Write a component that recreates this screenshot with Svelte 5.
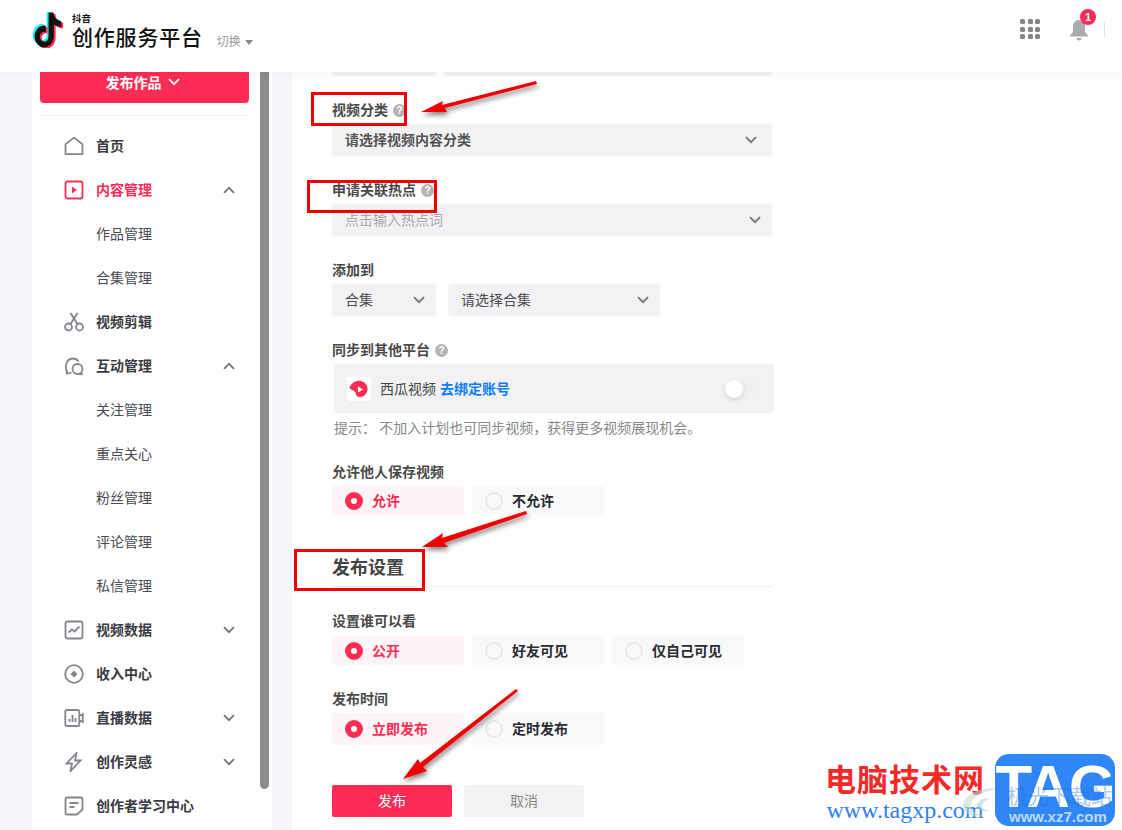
<script lang="ts">
    const tiktok = "M12.525.02c1.31-.02 2.61-.01 3.91-.02.08 1.53.63 3.09 1.75 4.17 1.12 1.11 2.7 1.62 4.24 1.79v4.03c-1.44-.05-2.89-.35-4.2-.97-.57-.26-1.1-.59-1.62-.93-.01 2.92.01 5.84-.02 8.75-.08 1.4-.54 2.79-1.35 3.94-1.31 1.92-3.58 3.17-5.91 3.21-1.43.08-2.86-.31-4.08-1.03-2.02-1.19-3.44-3.37-3.65-5.71-.02-.5-.03-1-.01-1.49.18-1.9 1.12-3.72 2.58-4.96 1.66-1.44 3.98-2.13 6.15-1.72.02 1.48-.04 2.96-.04 4.44-.99-.32-2.15-.23-3.02.37-.63.41-1.11 1.04-1.36 1.75-.21.51-.15 1.07-.14 1.61.24 1.64 1.82 3.02 3.5 2.87 1.12-.01 2.19-.66 2.77-1.61.19-.33.4-.67.41-1.06.1-1.79.06-3.57.07-5.36.01-4.03-.01-8.05.02-12.07z";

    const menu = [
        { label: "首页", icon: "home" },
        { label: "内容管理", icon: "play", active: true, arrow: "up" },
        { label: "作品管理", sub: true },
        { label: "合集管理", sub: true },
        { label: "视频剪辑", icon: "cut" },
        { label: "互动管理", icon: "chat", arrow: "up" },
        { label: "关注管理", sub: true },
        { label: "重点关心", sub: true },
        { label: "粉丝管理", sub: true },
        { label: "评论管理", sub: true },
        { label: "私信管理", sub: true },
        { label: "视频数据", icon: "chart", arrow: "down" },
        { label: "收入中心", icon: "coin" },
        { label: "直播数据", icon: "live", arrow: "down" },
        { label: "创作灵感", icon: "bolt", arrow: "down" },
        { label: "创作者学习中心", icon: "doc" }
    ];

    const saveOptions = [
        { label: "允许", on: true },
        { label: "不允许" }
    ];
    const viewOptions = [
        { label: "公开", on: true },
        { label: "好友可见" },
        { label: "仅自己可见" }
    ];
    const timeOptions = [
        { label: "立即发布", on: true },
        { label: "定时发布" }
    ];
</script>

{#snippet chevron(cls = "")}
    <svg class="chev {cls}" viewBox="0 0 12 8" width="12" height="8">
        <path d="M1 1.2l5 5 5-5" />
    </svg>
{/snippet}

{#snippet help()}
    <span class="help">?</span>
{/snippet}

{#snippet radios(options, tall = false)}
    <div class="radios" class:tall>
        {#each options as o}
            <div class="radio" class:on={o.on}>
                <span class="dot"></span>
                <span>{o.label}</span>
            </div>
        {/each}
    </div>
{/snippet}

{#snippet menuIcon(name)}
    <svg class="micon" class:pink={name === "play"} viewBox="0 0 20 20" width="20" height="20">
        {#if name === "home"}
            <path d="M1.5 18.200V8.200L10 1.600l8.500 6.600v10z" stroke-linejoin="round" />
        {:else if name === "play"}
            <rect x="1.500" y="1.500" width="17" height="17" rx="2" />
            <path class="solid" d="M8 6.500l5 3.500-5 3.500z" />
        {:else if name === "cut"}
            <circle cx="4.500" cy="15" r="3.500" />
            <circle cx="15.500" cy="15" r="3.500" />
            <path d="M6.500 12L13.500 1M13.500 12L6.500 1" />
        {:else if name === "chat"}
            <path d="M3.500 16.500C1 13 1 3 8.500 2.500c2.500-.2 4.500.8 6 3" />
            <path d="M2.500 18l.5-4M2.500 18l5-1.500" />
            <circle cx="13.500" cy="13" r="5" />
            <path d="M15 18.200h4" />
        {:else if name === "chart"}
            <rect x="1.500" y="1.500" width="17" height="17" rx="2" />
            <path d="M4.500 12.500l3.500-3 2.500 2 5-5" />
        {:else if name === "coin"}
            <circle cx="10" cy="10" r="8.800" />
            <path class="solid" d="M10 6.500l3.500 3.500-3.500 3.500-3.500-3.500z" />
        {:else if name === "live"}
            <path d="M2.800 2h11a1.500 1.500 0 0 1 1.500 1.500v13a1.500 1.500 0 0 1-1.500 1.500h-11a1.500 1.500 0 0 1-1.500-1.500v-13A1.500 1.500 0 0 1 2.800 2zM15.300 8l3.500-2v8l-3.500-2" />
            <path d="M5.500 14v-3M8.500 14V7M11.500 14v-4" />
        {:else if name === "bolt"}
            <path d="M12.500 1L2.500 11.500h5.500L6.500 19l10-10.500h-5.500z" />
        {:else if name === "doc"}
            <path d="M3 1.500h14a1.500 1.500 0 0 1 1.500 1.500v10.500L13 18.500H3A1.500 1.500 0 0 1 1.500 17V3A1.500 1.500 0 0 1 3 1.500z" />
            <path d="M5.500 7h9M5.500 11h5" />
        {/if}
    </svg>
{/snippet}

<div class="page">
    <header>
        <div class="logo">
            <svg class="note" viewBox="0 0 24 24" width="32" height="36" preserveAspectRatio="none">
                <path d={tiktok} fill="#25f4ee" transform="translate(-1 -.7) scale(.96)" />
                <path d={tiktok} fill="#fe2c55" transform="translate(1.800 1.400) scale(.96)" />
                <path d={tiktok} fill="#111" transform="translate(.4 .4) scale(.96)" />
            </svg>
            <div class="brand">
                <span class="brand-small">抖音</span>
                <span class="brand-name">创作服务平台</span>
            </div>
        </div>
        <div class="switch">切换<i></i></div>
        <div class="tools">
            <div class="apps">
                {#each Array(9) as _}<i></i>{/each}
            </div>
            <div class="bell">
                <svg viewBox="0 0 20 22" width="20" height="22">
                    <path d="M10 1c-4 0-6 3-6 7v5l-3 3.500v1h18v-1L16 13V8c0-4-2-7-6-7z" fill="#acacac" />
                    <path d="M7.500 19h5a2.500 2.500 0 0 1-5 0z" fill="#acacac" />
                </svg>
                <span class="badge">1</span>
            </div>
            <span class="tool-line"></span>
        </div>
    </header>

    <div class="main">
        <aside>
            <div class="publish">发布作品 {@render chevron("white")}</div>
            <div class="side-line"></div>
            <nav>
                {#each menu as m}
                    <div class="row" class:sub={m.sub} class:active={m.active}>
                        {#if m.icon}{@render menuIcon(m.icon)}{/if}
                        <span class="row-text">{m.label}</span>
                        {#if m.arrow}{@render chevron(m.arrow === "up" ? "up side" : "side")}{/if}
                    </div>
                {/each}
            </nav>
            <div class="thumb"></div>
        </aside>

        <section class="content">
            <div class="clipped">
                <div class="select w104"></div>
                <div class="select grow"></div>
            </div>

            <div class="field">
                <div class="label">视频分类 {@render help()}</div>
                <div class="select full strong"><span>请选择视频内容分类</span> {@render chevron("wide")}</div>
            </div>

            <div class="field">
                <div class="label">申请关联热点 {@render help()}</div>
                <div class="select full muted"><span>点击输入热点词</span> {@render chevron()}</div>
            </div>

            <div class="field">
                <div class="label">添加到</div>
                <div class="pair">
                    <div class="select w104"><span>合集</span> {@render chevron()}</div>
                    <div class="select w212"><span>请选择合集</span> {@render chevron()}</div>
                </div>
            </div>

            <div class="field">
                <div class="label">同步到其他平台 {@render help()}</div>
                <div class="sync">
                    <span class="xigua">
                        <svg viewBox="0 0 24 24" width="24" height="24">
                            <path d="M3 9.500C5 5.500 10 3 14 4c4.500 1 7 5 6.500 9-.5 4.500-4.500 7.500-8.500 7-2-.2-3-1.500-3-3 0-1-.8-2-2-3-1.500-1.200-5-2-4.500-4.500z" fill="#fe2c55" />
                            <path d="M11 9.500l5 3-5 3z" fill="#fff" />
                        </svg>
                    </span>
                    <span class="sync-text">西瓜视频</span>
                    <span class="link sync-text">去绑定账号</span>
                    <span class="toggle"><i></i></span>
                </div>
                <div class="hint">提示： 不加入计划也可同步视频，获得更多视频展现机会。</div>
            </div>

            <div class="field save">
                <div class="label">允许他人保存视频</div>
                {@render radios(saveOptions)}
            </div>

            <h2>发布设置</h2>

            <div class="field view">
                <div class="label">设置谁可以看</div>
                {@render radios(viewOptions)}
            </div>

            <div class="field time">
                <div class="label">发布时间</div>
                {@render radios(timeOptions, true)}
            </div>

            <div class="actions">
                <div class="btn primary">发布</div>
                <div class="btn">取消</div>
            </div>
        </section>
    </div>

    <!-- screenshot annotations -->
    <svg class="marks" viewBox="0 0 1122 830" width="1122" height="830">
        <defs>
            <filter id="sh" x="-20%" y="-40%" width="140%" height="180%">
                <feDropShadow dx="1" dy="3" stdDeviation="2.500" flood-color="#000" flood-opacity=".5" />
            </filter>
        </defs>
        <rect class="box" x="312.500" y="93.500" width="93" height="31" />
        <rect class="box" x="308.500" y="181.500" width="127" height="30" />
        <rect class="box" x="295.500" y="550.500" width="128" height="39" />
        <g filter="url(#sh)" fill="#f00000">
            <polygon points="421,112 443,101 442,105 536,81 537,84 445,108 447,112" />
            <polygon points="422,547 443,533 442,538 526,511 527,514 444,543 448,547" />
            <polygon points="403,779 418,759 420,763 516,689 518,691 423,767 427,771" />
        </g>
    </svg>

    <div class="watermark">
        <div class="wm-text">
            <span class="wm-cn">电脑技术网</span>
            <span class="wm-url">www.tagxp.com</span>
        </div>
        <svg class="swirl" viewBox="0 0 40 34" width="40" height="34">
            <path d="M38 3C22 0 6 8 3 18c-2 8 8 14 22 12C14 28 8 22 12 15 16 9 26 5 38 3z" fill="#bcd9c8" opacity=".55" />
            <path d="M30 12c-8 0-14 4-13 9 1 3 6 5 12 4-5-1-8-3-7-6 1-3 4-5 8-7z" fill="#a9cbe8" opacity=".6" />
        </svg>
        <div class="tag">
            TAG
            <span class="tag-cn">极光下载站</span>
            <span class="tag-url">www.xz7.com</span>
        </div>
    </div>
</div>

<style>
    :global(body) {
        margin: 0;
        background: #f6f7fb;
    }

    .page {
        position: relative;
        width: 1122px;
        height: 830px;
        overflow: hidden;
        font-family: "Noto Sans CJK SC", "Liberation Sans", sans-serif;
        font-size: 14px;
        color: #333;
    }

    header {
        position: relative;
        z-index: 2;
        height: 72px;
        box-sizing: border-box;
        padding: 12px 17px 0 32px;
        background: #fff;
        box-shadow: 0 2px 8px rgb(0 0 0 / 0.04);
        display: flex;
        align-items: flex-start;
    }

    .logo {
        display: flex;
        gap: 8px;
    }

    .note {
        display: block;
    }

    .brand {
        display: flex;
        flex-direction: column;
        color: #111;
    }

    .brand-small {
        font-size: 9.500px;
        line-height: 12px;
        font-weight: 700;
    }

    .brand-name {
        font-size: 21px;
        line-height: 24px;
        letter-spacing: 0.800px;
        font-weight: 500;
    }

    .switch {
        margin: 20px 0 0 14px;
        font-size: 12px;
        line-height: 18px;
        color: #999;
        display: flex;
        align-items: center;
        gap: 4px;
    }

    .switch i {
        width: 0;
        height: 0;
        margin-top: 2px;
        border: 4px solid transparent;
        border-top: 5px solid #888;
        border-bottom: 0;
    }

    .tools {
        margin-left: auto;
        display: flex;
        align-items: flex-start;
    }

    .apps {
        display: grid;
        grid-template-columns: repeat(3, 5px);
        gap: 2.500px;
        margin: 7px 29px 0 0;
    }

    .apps i {
        width: 5px;
        height: 5px;
        border-radius: 1.500px;
        background: #858585;
    }

    .bell {
        position: relative;
        width: 20px;
        height: 22px;
        margin-top: 7px;
    }

    .bell svg {
        display: block;
    }

    .badge {
        position: absolute;
        left: 11px;
        top: -10px;
        width: 16px;
        height: 16px;
        border-radius: 50%;
        background: #fe2c55;
        color: #fff;
        font: 700 11px/16px "Liberation Sans", sans-serif;
        text-align: center;
    }

    .tool-line {
        width: 1px;
        height: 16px;
        margin: 10px 0 0 15px;
        background: #e3e3e3;
    }

    .main {
        display: flex;
        height: 758px;
        overflow: hidden;
    }

    aside {
        position: relative;
        flex: none;
        width: 240px;
        margin: 0 20px 0 32px;
        box-sizing: border-box;
        padding: 0 23px 0 8px;
        background: #fff;
    }

    .publish {
        height: 31px;
        background: #fe2c55;
        border-radius: 0 0 4px 4px;
        color: #fff;
        font-weight: 700;
        line-height: 20px;
        display: flex;
        justify-content: center;
        align-items: flex-start;
        gap: 6px;
        padding-right: 4px;
        box-sizing: border-box;
    }

    .publish :global(.chev) {
        margin-top: 6px;
    }

    .side-line {
        height: 1px;
        margin-top: 12px;
        background: #eeeeef;
    }

    nav {
        margin-top: 8px;
    }

    .row {
        height: 44px;
        display: flex;
        align-items: center;
        gap: 12px;
        padding: 0 14px 0 24px;
        font-weight: 700;
        color: #3a3a42;
    }

    .row-text {
        margin-bottom: 2px;
    }

    .row.sub {
        padding-left: 56px;
        font-weight: 400;
        color: #4a4a52;
    }

    .row.active {
        color: #fe2c55;
        font-weight: 700;
    }

    .micon {
        flex: none;
        fill: none;
        stroke: #85858d;
        stroke-width: 1.800;
    }

    .micon.pink {
        stroke: #fe2c55;
    }

    .micon .solid {
        fill: currentColor;
        stroke: none;
        color: #85858d;
    }

    .micon.pink .solid {
        color: #fe2c55;
    }

    .thumb {
        position: absolute;
        top: 0;
        right: 3px;
        width: 9px;
        height: 717px;
        background: #8c8c8c;
        border-radius: 0 0 5px 5px;
    }

    .chev {
        flex: none;
        fill: none;
        stroke: #74747c;
        stroke-width: 1.800;
        margin-left: auto;
    }

    .chev.up {
        transform: rotate(180deg);
    }

    .chev.white {
        stroke: #fff;
        margin-left: 0;
    }

    .chev.wide {
        margin-right: 4px;
    }

    .content {
        flex: 1;
        box-sizing: border-box;
        padding-left: 40px;
        background: #fff;
    }

    .clipped {
        display: flex;
        gap: 8px;
        width: 440px;
        height: 4px;
        margin-bottom: 24px;
    }

    .clipped .select {
        height: 4px;
        padding: 0;
    }

    .field {
        margin-bottom: 24px;
    }

    .label {
        height: 20px;
        margin-bottom: 4px;
        line-height: 18px;
        font-weight: 700;
        color: #4a4a4a;
        display: flex;
        align-items: flex-start;
        gap: 5px;
    }

    .help {
        width: 13px;
        height: 13px;
        margin-top: 4px;
        border-radius: 50%;
        background: #b4b4b4;
        color: #fff;
        font: 700 10px/13px "Liberation Sans", sans-serif;
        text-align: center;
    }

    .select {
        height: 32px;
        box-sizing: border-box;
        padding: 0 11px 0 13px;
        background: #f2f2f4;
        border-radius: 4px;
        display: flex;
        align-items: center;
        justify-content: space-between;
        color: #4c4c4c;
    }

    .select span {
        margin-bottom: 2px;
    }

    .select.full {
        width: 440px;
    }

    .select.strong {
        font-weight: 700;
        color: #555;
    }

    .select.muted {
        color: #aaa;
    }

    .w104 {
        width: 104px;
    }

    .w212 {
        width: 212px;
    }

    .grow {
        flex: 1;
    }

    .pair {
        display: flex;
        gap: 12px;
    }

    .sync {
        width: 440px;
        height: 49px;
        margin-left: 2px;
        box-sizing: border-box;
        padding: 0 12px 0 13px;
        background: #f2f2f4;
        border-radius: 4px;
        display: flex;
        align-items: center;
        color: #444;
    }

    .sync-text {
        margin-bottom: 2px;
    }

    .xigua {
        width: 24px;
        height: 24px;
        margin-right: 9px;
        background: #fff;
        border-radius: 3px;
    }

    .xigua svg {
        display: block;
    }

    .link {
        margin-left: 4px;
        color: #0d7dfb;
        font-weight: 700;
    }

    .toggle {
        position: relative;
        width: 37px;
        height: 22px;
        margin-left: auto;
        border-radius: 11px;
        background: #f0f0f2;
    }

    .toggle i {
        position: absolute;
        left: 0;
        top: 2px;
        width: 18px;
        height: 18px;
        border-radius: 50%;
        background: #fff;
        box-shadow: 0 2px 5px rgb(0 0 0 / 0.12);
    }

    .hint {
        height: 21px;
        margin: 4px 0 0 2px;
        line-height: 20px;
        color: #888;
    }

    .field.save {
        margin-bottom: 0;
    }

    .radios {
        display: flex;
        gap: 8px;
    }

    .radio {
        width: 132px;
        height: 29px;
        box-sizing: border-box;
        padding-left: 13px;
        background: #f8f9f9;
        border-radius: 2px;
        display: flex;
        align-items: center;
        gap: 9px;
        font-weight: 700;
        color: #2a2a32;
    }

    .radio span:last-child {
        margin-bottom: 2px;
    }

    .radios.tall .radio {
        height: 32px;
    }

    .radio.on {
        background: #fff5f7;
        color: #fe2c55;
    }

    .dot {
        width: 18px;
        height: 18px;
        box-sizing: border-box;
        border: 2px solid #e8e8e8;
        border-radius: 50%;
    }

    .radio.on .dot {
        border: 6px solid #fe2c55;
        background: #fff;
    }

    h2 {
        margin: 40px 0 24px;
        width: 440px;
        height: 32px;
        box-sizing: border-box;
        border-bottom: 1px solid #eeeeef;
        font-size: 18px;
        line-height: 22px;
        font-weight: 700;
        color: #444;
    }

    .field.view {
        margin-bottom: 24px;
    }

    .field.view .label {
        margin-bottom: 5px;
    }

    .field.time {
        margin-bottom: 40px;
    }

    .actions {
        display: flex;
        gap: 12px;
    }

    .btn {
        width: 120px;
        height: 32px;
        background: #f2f2f4;
        border-radius: 2px;
        color: #888;
        line-height: 30px;
        text-align: center;
    }

    .btn.primary {
        background: #fe2c55;
        color: #fff;
    }

    .marks {
        position: absolute;
        left: 0;
        top: 0;
        z-index: 3;
        pointer-events: none;
    }

    .box {
        fill: none;
        stroke: #f00000;
        stroke-width: 3;
    }

    .watermark {
        position: absolute;
        right: 7px;
        bottom: 4px;
        z-index: 4;
        display: flex;
        align-items: flex-end;
    }

    .wm-text {
        display: flex;
        flex-direction: column;
        align-items: center;
    }

    .wm-cn {
        font-size: 31px;
        line-height: 38px;
        font-weight: 700;
        letter-spacing: 1px;
        color: #f32a2a;
    }

    .wm-url {
        margin: 0 0 3px;
        font: 24px/26px "Liberation Serif", serif;
        color: #2f80f0;
    }

    .swirl {
        position: absolute;
        left: 135px;
        bottom: 6px;
    }

    .tag {
        position: relative;
        width: 120px;
        height: 72px;
        margin-left: 10px;
        background: #2f86f6;
        border-radius: 14px;
        color: #fff;
        font: 700 60px/66px "Liberation Sans", sans-serif;
        text-align: center;
        letter-spacing: -1px;
        overflow: hidden;
    }

    .tag-cn {
        position: absolute;
        left: 12px;
        top: 28px;
        font: 400 21px/26px "Noto Sans CJK SC", sans-serif;
        letter-spacing: 0;
        color: rgb(30 110 220 / 0.4);
        white-space: nowrap;
    }

    .tag-url {
        position: absolute;
        left: 14px;
        top: 54px;
        font: 700 15px/18px "Liberation Sans", sans-serif;
        letter-spacing: 0;
        color: rgb(255 255 255 / 0.7);
    }
</style>
